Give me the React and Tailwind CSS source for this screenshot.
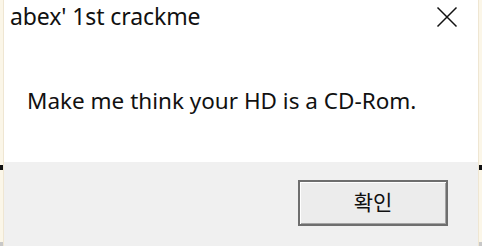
const SANS = "font-['Noto_Sans','Noto_Sans_CJK_KR',sans-serif]";

function EdgeStrip({ side }) {
  return (
    <div className={`w-[4px] h-full flex flex-col bg-[#fbf6e8] ${side === "left" ? "border-r border-[#efe6d2]" : "border-l border-[#efe6d2]"}`}>
      <div className="h-[165px]" />
      <div className="h-[5px] bg-[#111]" />
      <div className="flex-1" />
      <div className="h-[4px] bg-[#c8c8c8]" />
    </div>
  );
}

function CloseIcon() {
  return (
    <svg width="22" height="22" viewBox="0 0 22 22" className="text-[#111]">
      <path d="M1.5 1.5 L20.5 20.5 M20.5 1.5 L1.5 20.5" stroke="currentColor" strokeWidth="1.5" fill="none" />
    </svg>
  );
}

export default function App() {
  return (
    <div className={`w-[482px] h-[246px] flex bg-white text-black ${SANS}`}>
      <EdgeStrip side="left" />
      <div className="flex-1 flex flex-col">
        <div className="h-[162px] bg-white flex flex-col">
          <div className="flex items-start justify-between h-[40px]">
            <div className="pl-[6px] pt-[1px] text-[23px] leading-[30px] text-[#111] tracking-[-0.1px]">abex' 1st crackme</div>
            <div className="pr-[20px] pt-[6px]">
              <CloseIcon />
            </div>
          </div>
          <div className="pl-[23px] pt-[46px] text-[22.5px] leading-[30px] text-[#111]">
            Make me think your HD is a CD-Rom.
          </div>
        </div>
        <div className="flex-1 bg-[#f0f0f0] flex justify-end items-start pt-[18px] pr-[30px]">
          <button className="w-[150px] h-[46px] border-2 border-[#6e6e6e] bg-[#ececec] shadow-[inset_1px_1px_0_#fff,inset_-1px_-1px_0_#a3a3a3] text-[21px] leading-none text-[#111] flex items-center justify-center pb-[2px]">
            확인
          </button>
        </div>
      </div>
      <EdgeStrip side="right" />
    </div>
  );
}
